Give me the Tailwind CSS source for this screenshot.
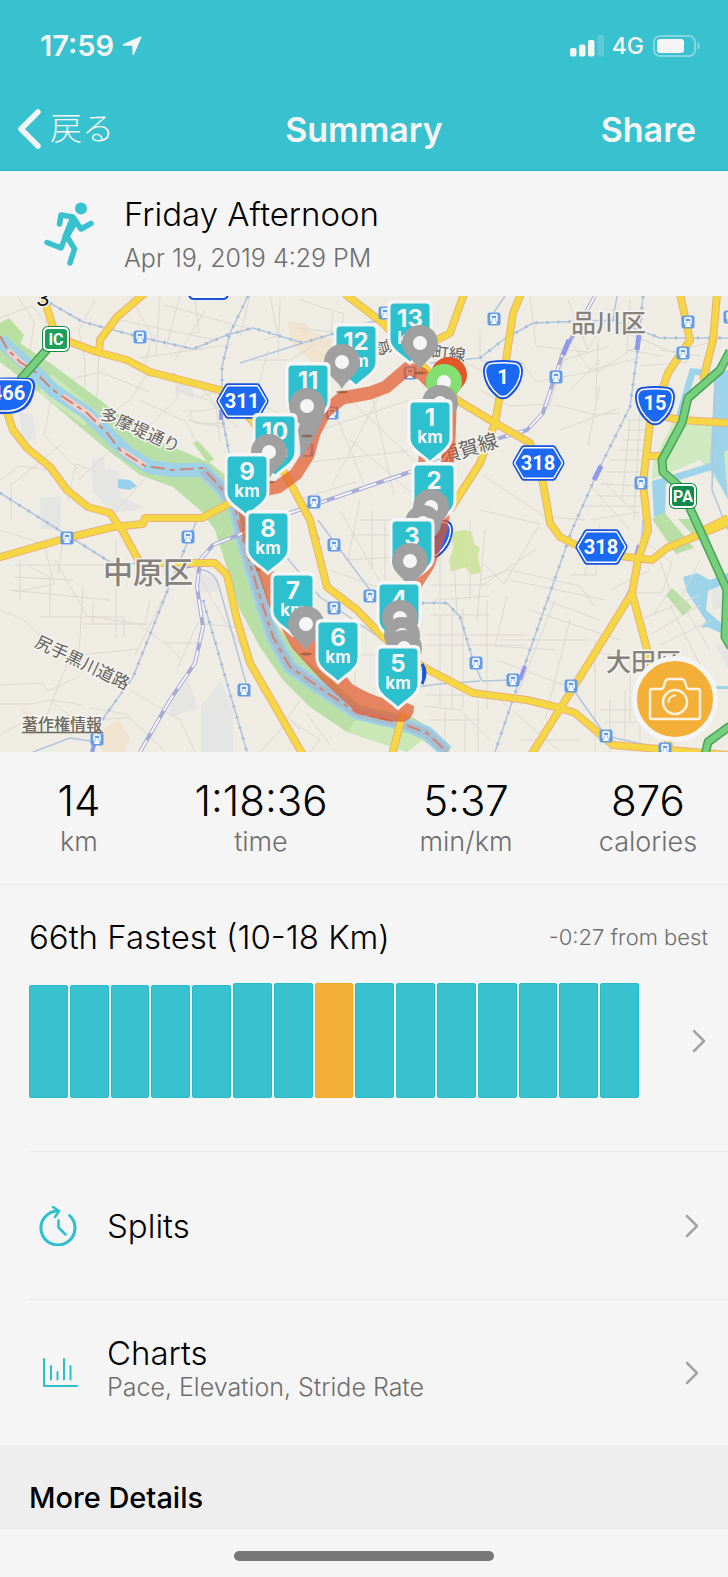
<!DOCTYPE html>
<html lang="ja">

<head>
    <meta charset="UTF-8">
    <meta name="viewport" content="width=device-width, initial-scale=1.0">
    <title>Summary</title>
    <script src="https://cdn.jsdelivr.net/npm/@tailwindcss/browser@4"></script>
</head>

<body class="bg-[#f5f5f5] text-black font-['Inter','Noto_Sans_CJK_JP',sans-serif]">

    <!-- Header -->
    <header class="bg-[#38c1cf] text-[#f5f5f5] border-b border-[#1bb9c9]">
        <div class="flex items-center justify-between pt-6 pl-10 pr-7 h-[68px]">
            <div class="flex items-center gap-2 text-[29px] leading-10 font-semibold">
                <span>17:59</span>
                <svg class="w-5 h-5" viewBox="0 0 20 20" fill="currentColor"><path d="M18.500 .6c.6-.2 1.100.3.9.9l-7.400 17c-.3.800-1.600.6-1.600-.3V9.800H1.700c-1 0-1.200-1.300-.3-1.700z" /></svg>
            </div>
            <div class="flex items-center gap-2">
                <svg class="w-[34px] h-[22px]" viewBox="0 0 34 22" fill="currentColor">
                    <rect x="0" y="13" width="6.500" height="8.500" rx="2" />
                    <rect x="9" y="9.500" width="6.500" height="12" rx="2" />
                    <rect x="18" y="5" width="6.500" height="16.500" rx="2" />
                    <rect x="27.500" y="0" width="6.500" height="21.500" rx="2" opacity=".2" />
                </svg>
                <span class="text-[23px] leading-8 font-medium">4G</span>
                <svg class="w-12 h-6" viewBox="0 0 48 24">
                    <rect x="2" y="2" width="41" height="20" rx="6" fill="none" stroke="#f5f5f5" stroke-opacity=".4" stroke-width="2" />
                    <rect x="5" y="5" width="27" height="14" rx="3" fill="#f5f5f5" />
                    <path d="M45.500 8.500c3 1.200 3 5.800 0 7z" fill="#f5f5f5" fill-opacity=".45" />
                </svg>
            </div>
        </div>
        <nav class="grid grid-cols-3 items-center h-[102px] pt-5 px-4 text-[34px]">
            <a href="#" class="flex items-center gap-2 text-[32px] font-light">
                <svg class="w-[26px] h-[42px]" viewBox="0 0 26 42" fill="none" stroke="currentColor" stroke-width="5.500" stroke-linecap="round" stroke-linejoin="round"><path d="M22 4 5 21l17 17" /></svg>
                戻る
            </a>
            <h1 class="text-center font-semibold">Summary</h1>
            <button class="justify-self-end mr-4 font-semibold">Share</button>
        </nav>
    </header>

    <main>
        <!-- Activity title -->
        <section class="flex items-center gap-7 h-[125px] pl-11 pr-8">
            <svg class="w-[52px] h-16 shrink-0" viewBox="0 0 52 64" fill="none" stroke="#38c1cf" stroke-width="5.500" stroke-linecap="round" stroke-linejoin="round">
                <circle cx="37" cy="6.500" r="6" fill="#38c1cf" stroke="none" />
                <path d="M15.500 22 17 13l12 2 8 12 10-5.500" />
                <path d="m29 16-12 30L3 40.500" />
                <path d="m22 33 8.500 14L26 61" />
                <path d="m27 17-7 17 4 1 9-15z" fill="#38c1cf" stroke-width="3" />
            </svg>
            <div class="pt-1">
                <h2 class="text-[33px] leading-10 font-light">Friday Afternoon</h2>
                <p class="mt-1 text-[25px] leading-10 font-light text-[#6e6e6e]">Apr 19, 2019 4:29 PM</p>
            </div>
        </section>

        <!-- Route map -->
        <section class="relative">
            <svg class="block w-full" viewBox="0 296 728 456" role="img" aria-label="Route map">
                <defs>
                    <symbol id="train" viewBox="0 0 14 14">
                        <rect x=".5" y=".5" width="13" height="13" rx="2.500" fill="#629be8" />
                        <path d="M4.800 2.300h4.400c.8 0 1.300.5 1.300 1.300v4.600c0 .8-.5 1.300-1.300 1.300H4.800c-.8 0-1.300-.5-1.300-1.300V3.600c0-.8.5-1.300 1.300-1.300zM4 12l1.300-2.200h3.400L10 12" fill="#fff" stroke="#fff" stroke-width=".5" />
                        <path d="M4.800 3.800h4.400v2.400H4.800z" fill="#629be8" />
                        <circle cx="5.200" cy="8" r=".7" fill="#629be8" />
                        <circle cx="8.800" cy="8" r=".7" fill="#629be8" />
                    </symbol>
                    <symbol id="shield" viewBox="0 0 46 66">
                        <path d="M6 0h34q5.500 0 5.500 6v33c0 12-12 16.500-22.500 26.500C12.500 55.500.5 51 .5 39V6Q.5 0 6 0z" fill="#f5f5f5" />
                        <path d="M7 3.500h32q3.500 0 3.500 3.500v32c0 9.500-10.500 14-19.500 22.500C14 53 3.500 48.500 3.500 39V7q0-3.500 3.500-3.500z" fill="#2dc0cf" />
                    </symbol>
                    <symbol id="pin" viewBox="0 0 40 52">
                        <ellipse cx="20" cy="49" rx="6" ry="1.500" fill="#7a4a2c" opacity=".6" />
                        <path d="M20 1a18 18 0 0 1 18 18c0 12-13 17-18 27C15 36 2 31 2 19A18 18 0 0 1 20 1z" />
                        <circle cx="20" cy="19" r="7" fill="#f5f5f5" />
                    </symbol>
                    <symbol id="national" viewBox="0 0 42 40">
                        <path d="M8 1q13-2 26 0c5 1 7 5 7 11-1 13-9 22-15 26q-5 2.500-10 0C10 34 2 25 1 12 1 6 3 2 8 1z" fill="#1a53e0" />
                        <path d="M9 3.500q12-1.500 24 0c4 .8 5.500 4 5.500 8.500-1 11-8 19-13.500 23.500q-4 2-8 0C11.500 31 4.500 23 3.500 12c0-4.500 1.500-7.700 5.500-8.500z" fill="#1b68f2" stroke="#fff" stroke-width="1.500" />
                    </symbol>
                    <symbol id="prefectural" viewBox="0 0 54 38">
                        <path d="M12 1h30q2 0 3 2l8 14q1 2 0 4l-8 14q-1 2-3 2H12q-2 0-3-2L1 21q-1-2 0-4L9 3q1-2 3-2z" fill="#1a53e0" />
                        <path d="M13 3.500h28q1.500 0 2 1L51 18q.5 1 0 2l-8 13.500q-.5 1-2 1H13q-1.500 0-2-1L3 20q-.5-1 0-2l8-13.500q.5-1 2-1z" fill="#1b68f2" stroke="#fff" stroke-width="1.500" />
                    </symbol>
                    <path id="street1" d="M99 418 185 457" />
                    <path id="street2" d="M34 646Q80 668 136 695" />
                </defs>

                <rect x="0" y="296" width="728" height="456" fill="#efece4" />

                <!-- Blocks and parks -->
                <path d="M92 459l12-2 1 12 14 2 2 27 24 8-10 5-22 1-20-20zM178 383l14-2 2 18-18-8zM18 412l15 3 3 22-12 6zM40 498l21-2v33H41zM170 697l18-20 10 32-28 8zM201 706l20-26 12 30v42h-32zM198 573l20 3v16h-20zM716 647l12-6v28zM711 588l17-2v20l-15 4z" fill="#e5e5e4" />
                <path d="M118 479l12 1 7 6-8 4-11-2z" fill="#97d0e8" />
                <path d="M287 321l20 3 5 8 20 8-2 25-13 3-26-26zM22 710l12 5 8 18-12 2zM98 732l20-12 12 18-6 14H102z" fill="#f0e4d0" />
                <path d="M0 323l9-5 15 17-5 12-19-8zM193 443l5-2 16 18-6 4z" fill="#badf9f" />
                <path d="M452 532l12-2 8 2 2 12 6 4-2 8 3 16-10 3-6-8-14 5-2-12 5-12z" fill="#cfe49c" />
                <path d="M673 422l55 3v70l-28-35-48 20 1-18z" fill="#cfe9c0" />
                <path d="M690 368l20 2-2 6-13-1-14 45h-6zM715 370h13v80l-4 2 4 48-16-30-46 14-1 32-11 1-2-36 58-18z" fill="#9dd4e9" />
                <path d="M652 519l24 35 18-6-30-36zM678 519l20 22-6-22zM666 595l6-7 20 19-9 9z" fill="#b9dea6" />
                <path d="M683 577l14-4 13 7 18-7v9l-20 9-2 19 14 12 8 8v6l-21-9-6 1 5-7-19-29z" fill="#9dd4e9" />
                <path d="M714 686h14v3h-14z" fill="#9dd4e9" />

                <!-- Minor streets -->
                <g fill="none" stroke="#dcd9d1" stroke-width="1">
                    <path d="M18 296l16 26-4 30M0 318l32-12 28 32M95 300l-16 30 6 30M130 296l22 40-8 34M160 296l-4 60M165 305l85 24M180 296l-14 52M205 310l-30 50M195 300l4 33-8 0M120 320l95 20M140 358l92-14M99 350l-2 50 18 20M85 360l0 30-30 10M70 380l30-8 50 20M150 370l-20 30-20 14M130 365l20 12 24-4 4 24-28 28" />
                    <path d="M182 411l20 0 20-4M178 390l30 10 30 28M196 380l20 26 4 36M200 398q16-12 28 6t-16 20-20-14M188 420l40 8M140 400l46 22 10 20M52 395l-8 40 34 34M78 480l40-36 34 20M11 520l0-35 50-40M68 500l8-36 20 8M150 473l-36 40M0 480l20-14 30 4M0 530l44 14 10 40-40 8" />
                    <path d="M14 565h90M14 577l60 3M10 590l100 10M20 560v40M62 545l-4 30M50 617v-40l-20-10M0 610l24 10 44 42-28 70M83 587l-4 68 60-6M55 560l32 56 60 9M116 540v98M93 605v20M40 617h84v20M150 600l-5 24H83M135 655l30-60 20-38M160 640l-20-14M160 643h40M178 667l20-45M182 660l-20-20M0 685l42-2 6 8 30-14M0 704l30 0 22-4 30 5M0 735l22-12M90 708l36 6 40 38M130 690l50 30 15 32M50 700l25 20 55-2M190 560l34 60 26 40M205 624l45 5" />
                    <path d="M250 296l-10 40M270 296l8 40-14 4M280 300l-2 55M333 312l-2 20-32-4M300 300l44 14-4 24M250 360l40 0 26-16M268 350l-12 46M330 400l34 84M345 395l80 76M320 430l90-30M300 463l108-12M380 395l-48 90M350 440l70 60M250 400l40 18M340 510l50 90M372 395l22 100M460 360l60 30M480 330l0 30 40 10M296 500l60-18M360 500l-12 60" />
                    <path d="M360 520h70M350 535h70M372 510v60M385 520v60M345 560l70-4M330 570l50 18M330 630l60-6M345 640l-3 50M350 655h35M355 640v60M440 540v70M452 525l5 90M470 520v80M485 530l-8 90M430 585h60M435 600l55-4M430 615h60M425 635h100M425 645h100M440 615v90M452 610v100M463 608v100M487 600v110M425 695h60M430 720h50M445 710v42M465 715v37M478 700v52M425 706l35 4 30 30" />
                    <path d="M300 700l-20 30-20 22M290 720l30 20-10 12M330 745l-24-32M260 690l40 40" />
                    <path d="M530 296l6 50 50 6 30-46M570 340l20 30 50-12M480 390l30 16 40-2M520 360l16 22 64-12 40-26M548 410l16-50 45-14M556 405l40 10 24-2M600 385l-12 60M560 430l60-22M568 300l20 50M598 340l-2 60M570 390l30-30M630 300l-3 50 35 6M620 330l52 22 40-10M660 350l40 6M640 366l50-4M627 420h26M625 430h26M622 440h26M620 450h27M610 460h34M605 472h35M600 484l50 2M596 496h50M630 420l-8 80M640 410l-6 110M590 485l40 45M600 478l40 40M585 506h55M590 520l50-8" />
                    <path d="M484 476l60 40 40 4M480 510l60 14-36 60-20-20M480 587l56-38M510 580l95 20M480 580l30-10 70 16 14 20M507 596l-12 50 60 4M530 610l90 30M545 600l55 20M555 600l-40 100M570 620l-25 100M570 575l26 0v-12M600 525l-16 50M590 650l40 10v60M595 640v112M610 590l40-20M632 593l30 0 10-30-32-26M660 560l10 30-16 24M640 620l60-25M650 635l50-30M660 645l52-25M680 600l30 50M700 560l-20 40M670 605l30 60M500 640h90M497 660l80 30M500 700l60 52M610 700v52M625 690v60M600 710h80M605 722h60M640 690v62M520 740h60" />
                </g>

                <!-- River -->
                <path d="M0 330 50 363 100 400 147 437 180 450 210 463 234 482 247 540 273 620 300 655 360 705 412 717 430 728 450 752H440L422 740 407 752 347 732 310 707 283 680 260 647 240 610 215 530 200 510 173 487 140 475 110 452 80 427 40 393 0 362z" fill="#b9dea6" />
                <path d="M38 392 84 426 100 414 52 374zM347 732 407 752 422 740 400 728 358 716z" fill="#cae7b6" />
                <path d="M0 340 33 370 53 390 87 413 107 433 127 453 150 467 173 470 203 470 220 487 235 507 243 540 260 597 273 637 290 667 323 690 357 713 400 723 427 733 447 752" fill="none" stroke="#9fd2e6" stroke-width="14" stroke-linejoin="round" />
                <path d="M203 470 220 487 235 507 243 540 260 597 273 637 290 667 323 690 357 713 400 723 427 733 447 752" fill="none" stroke="#a5bed0" stroke-width="9" stroke-linejoin="round" />
                <path d="M8 350 20 362 33 370M62 396 87 413 100 424M120 450 145 466" fill="none" stroke="#f0cfc7" stroke-width="6" />
                <path d="M0 336 8 350 20 362 33 370 53 390 87 413 107 433 120 450 145 466 173 470 203 468 220 487 235 507 243 540 260 597 273 637 290 667 323 690 357 713 400 723 427 733 447 752" fill="none" stroke="#cf8379" stroke-width="2" stroke-dasharray="14 5 5 5" />

                <!-- Railways -->
                <g fill="none" stroke-linejoin="round">
                    <path d="M50 303 83 322 140 337 193 349 227 335 253 328 303 343 387 317M240 363 303 343M248 296 230 333 222 367 222 417 230 457M0 493 43 520 110 562 140 564M197 520 173 577 133 677 97 727M97 742 70 738 33 752M505 296 490 318M430 363 480 358 503 340 533 323 613 320 617 296M613 320 660 338 728 338M643 296 638 347 630 407 600 467 572 530 523 670 495 752M203 600 247 752M200 570Q215 570 220 590L250 697M283 553 320 597 383 640M318 520 370 590 400 600M422 603 447 603 460 617 474 663 482 681 513 680M390 690 440 684 480 681M300 500 320 540M571 686 606 736 665 749M643 520 640 570 580 680 530 752M715 370 712 490 728 530" stroke="#b3c5dd" stroke-width="1.500" />
                    <path d="M50 303 83 322 140 337 193 349 227 335 253 328 303 343 387 317M248 296 230 333 222 367 222 417 230 457M0 493 43 520 110 562M197 520 173 577 133 677 97 727M480 358 503 340 533 323 613 320 660 338 728 338M643 296 638 347 630 407 600 467 572 530 523 670 495 752M203 600 247 752M422 603 447 603 460 617 474 663" stroke="#a3bbda" stroke-width="3" stroke-dasharray="2 9" />
                </g>
                <g fill="none" stroke-linejoin="round">
                    <path d="M595 296 563 353 543 413 527 430 503 437 407 473 290 513 243 533 213 545 200 560 197 587 203 627 195 663 170 700 140 752" stroke="#a7abd8" stroke-width="4" />
                    <path d="M595 296 563 353 543 413 527 430 503 437 407 473 290 513 243 533 213 545 200 560 197 587 203 627 195 663 170 700 140 752" stroke="#f7f7fb" stroke-width="2" stroke-dasharray="18 8" />
                    <path d="M569 340 563 355M601 466 594 480M639 335 637 350M174 568 197 564" stroke="#8f9aea" stroke-width="5" />
                    <path d="M639 545 636 556M525 666 520 680M95 742 92 752M221 410V420" stroke="#8f9aea" stroke-width="4" />
                </g>

                <!-- Main roads -->
                <g fill="none" stroke-linejoin="round">
                    <g stroke="#e9b179" stroke-width="8">
                        <path d="M43 296 54 330 70 342 97 352 127 360 150 372 220 390 252 420 287 477 310 520 327 587 357 610 383 637 423 667 473 693 527 700 560 708 575 713 613 745 728 755M145 293 117 317 100 340 99 352M0 396 7 413 13 430 27 448 50 467 67 490 88 507 110 513 122 530 140 563 215 563 227 575 237 620 250 663 303 755M230 503 202 518 145 518 143 524 113 527 67 538-3 558M345 294 383 323 420 363 457 400 490 420 530 443 543 483 550 523 560 537 580 547 627 557 652 560 667 548 730 522M464 294 450 333 437 340M521 294 513 313 505 367 495 423 480 463 450 510M680 294 690 340 668 373 663 387 650 423 643 483 648 530 638 560 632 593 580 677 531 755M717 294 713 340 703 380M657 415 680 420 730 423M647 456H663M632 593 648 653 671 755M403 713 392 755M728 518 700 532" />
                    </g>
                    <g stroke="#f5d643" stroke-width="6">
                        <path d="M43 296 54 330 70 342 97 352 127 360 150 372 220 390 252 420 287 477 310 520 327 587 357 610 383 637 423 667 473 693 527 700 560 708 575 713 613 745 728 755M145 293 117 317 100 340 99 352M0 396 7 413 13 430 27 448 50 467 67 490 88 507 110 513 122 530 140 563 215 563 227 575 237 620 250 663 303 755M230 503 202 518 145 518 143 524 113 527 67 538-3 558M345 294 383 323 420 363 457 400 490 420 530 443 543 483 550 523 560 537 580 547 627 557 652 560 667 548 730 522M464 294 450 333 437 340M521 294 513 313 505 367 495 423 480 463 450 510M680 294 690 340 668 373 663 387 650 423 643 483 648 530 638 560 632 593 580 677 531 755M717 294 713 340 703 380M657 415 680 420 730 423M647 456H663M632 593 648 653 671 755M403 713 392 755M728 518 700 532" />
                    </g>
                    <path d="M50 346 20 380M730 351 720 370 688 398 682 423 662 460 663 472 680 487 700 530 727 590 725 637 731 647M730 726 708 742 705 755" stroke="#47a454" stroke-width="9" />
                    <path d="M50 346 20 380M730 351 720 370 688 398 682 423 662 460 663 472 680 487 700 530 727 590 725 637 731 647M730 726 708 742 705 755" stroke="#77cf7e" stroke-width="6" />
                </g>

                <!-- Stations -->
                <g>
                    <use href="#train" x="133" y="330" width="14" height="14" /><use href="#train" x="325" y="406" width="14" height="14" />
                    <use href="#train" x="307" y="495" width="14" height="14" /><use href="#train" x="378" y="306" width="14" height="14" />
                    <use href="#train" x="403" y="366" width="14" height="14" /><use href="#train" x="300" y="443" width="14" height="14" />
                    <use href="#train" x="487" y="312" width="14" height="14" /><use href="#train" x="549" y="370" width="14" height="14" />
                    <use href="#train" x="681" y="315" width="14" height="14" /><use href="#train" x="676" y="346" width="14" height="14" />
                    <use href="#train" x="634" y="476" width="14" height="14" /><use href="#train" x="723" y="310" width="14" height="14" />
                    <use href="#train" x="60" y="531" width="14" height="14" /><use href="#train" x="181" y="530" width="14" height="14" />
                    <use href="#train" x="90" y="732" width="14" height="14" /><use href="#train" x="237" y="683" width="14" height="14" />
                    <use href="#train" x="327" y="538" width="14" height="14" /><use href="#train" x="327" y="601" width="14" height="14" />
                    <use href="#train" x="363" y="589" width="14" height="14" /><use href="#train" x="469" y="656" width="14" height="14" />
                    <use href="#train" x="506" y="673" width="14" height="14" /><use href="#train" x="564" y="679" width="14" height="14" />
                    <use href="#train" x="599" y="729" width="14" height="14" /><use href="#train" x="658" y="742" width="14" height="14" />
                </g>

                <!-- Place names -->
                <g fill="#85817c" stroke="#f5f3ee" stroke-width="3" paint-order="stroke" font-weight="500">
                    <text x="571" y="332" font-size="25">品川区</text>
                    <text x="103" y="583" font-size="30">中原区</text>
                    <text x="606" y="671" font-size="25">大田区</text>
                    <g font-size="17" font-weight="400" fill="#66625e">
                        <text><textPath href="#street1">多摩堤通り</textPath></text>
                        <text><textPath href="#street2">尻手黒川道路</textPath></text>
                        <text x="379" y="353" transform="rotate(75 386 345)">爲</text>
                        <text x="431" y="358" transform="rotate(6 431 358)">町線</text>
                        <text x="442" y="464" font-size="20" transform="rotate(-17 442 464)">須賀線</text>
                    </g>
                    <text x="22" y="730" font-size="16" fill="#6b6761">著作権情報</text>
                    <path d="M22 732.500h81" stroke="#6b6761" stroke-width="1.500" />
                    <text x="36" y="306" font-size="22" font-weight="400" fill="#111">3</text>
                </g>

                <!-- Route signs -->
                <path d="M189 293h39q0 6-5 6h-29q-5 0-5-6z" fill="#fff" stroke="#1a53e0" stroke-width="2" />
                <g fill="#fff" font-size="20" text-anchor="middle" class="font-['Roboto',sans-serif] font-bold">
                    <rect x="42" y="326" width="28" height="26" rx="6" fill="#128a4b" />
                    <rect x="44" y="328" width="24" height="22" rx="4" fill="#1e9f5b" stroke="#fff" stroke-width="2" />
                    <text x="56" y="345" font-size="16">IC</text>
                    <rect x="669" y="483" width="28" height="26" rx="6" fill="#128a4b" />
                    <rect x="671" y="485" width="24" height="22" rx="4" fill="#12894a" stroke="#fff" stroke-width="2" />
                    <text x="683" y="502" font-size="16">PA</text>
                    <path d="M-10 378q20-1 40 0 6 2 5 10c-3 19-12 25-27 26h-18z" fill="#1a53e0" />
                    <path d="M-10 380q20-1 38 0 5 2 4 8c-3 16-11 22-24 23h-18z" fill="#1b68f2" stroke="#fff" stroke-width="1.500" />
                    <text x="8" y="400">466</text>
                    <use href="#prefectural" x="216" y="382" width="53" height="38" /><text x="242" y="408">311</text>
                    <use href="#prefectural" x="512" y="444" width="53" height="38" /><text x="538" y="470">318</text>
                    <use href="#prefectural" x="575" y="528" width="53" height="38" /><text x="601" y="554">318</text>
                    <use href="#national" x="482" y="360" width="42" height="40" /><text x="503" y="384">1</text>
                    <use href="#national" x="634" y="386" width="42" height="40" /><text x="655" y="410">15</text>
                    <use href="#national" x="412" y="519" width="42" height="40" />
                    <path d="M422 664q6 8 0 20" fill="#1b68f2" stroke="#1a53e0" stroke-width="3" />
                </g>

                <!-- Track -->
                <g fill="none" stroke="#e2582b" stroke-opacity=".7" stroke-linejoin="round" stroke-linecap="round">
                    <path d="M242 500 248 535 262 570" stroke-width="11" stroke-linecap="butt" />
                    <path d="M256 568 268 560 282 590 300 620 330 655 352 684Q380 701 405 702L414 706Q414 720 402 722 378 721 356 712L322 681 292 648 268 604z" fill="#e2582b" fill-opacity=".7" stroke="none" />
                    <path d="M264 490 278 487 296 474 308 455 314 433 325 412 342 398 370 393 386 387 408 368 422 374 440 392 450 410 449 440 445 500 441 530 428 565 412 590" stroke-width="13" />
                    <path d="M423 449 421 470 434 500" stroke-width="7" />
                </g>

                <!-- Photo pins and kilometre markers -->
                <g fill="#a0a0a0" class="font-bold">
                    <use href="#pin" x="429" y="356" width="40" height="52" fill="#e2562a" />
                    <use href="#pin" x="424" y="363" width="40" height="52" fill="#82e070" />
                    <use href="#shield" x="387" y="300" width="46" height="66" />
                    <text x="410" y="327" fill="#f5f5f5" font-size="24" text-anchor="middle">13<tspan x="410" dy="17" font-size="17">km</tspan></text>
                    <use href="#pin" x="400" y="324" width="40" height="52" />
                    <use href="#shield" x="333" y="323" width="46" height="66" />
                    <text x="356" y="350" fill="#f5f5f5" font-size="24" text-anchor="middle">12<tspan x="356" dy="17" font-size="17">km</tspan></text>
                    <use href="#pin" x="322" y="343" width="40" height="52" />
                    <use href="#pin" x="420" y="384" width="40" height="52" />
                    <use href="#shield" x="285" y="362" width="46" height="66" />
                    <text x="308" y="389" fill="#f5f5f5" font-size="24" text-anchor="middle">11<tspan x="308" dy="17" font-size="17">km</tspan></text>
                    <path d="M306 404h19c0 12-3 18-7 26-3 12-13 18-16 30l-4-30z" />
                    <use href="#pin" x="287" y="387" width="40" height="52" />
                    <use href="#shield" x="252" y="413" width="46" height="66" />
                    <text x="275" y="440" fill="#f5f5f5" font-size="24" text-anchor="middle">10<tspan x="275" dy="17" font-size="17">km</tspan></text>
                    <use href="#shield" x="407" y="399" width="46" height="66" />
                    <text x="430" y="426" fill="#f5f5f5" font-size="24" text-anchor="middle">1<tspan x="430" dy="17" font-size="17">km</tspan></text>
                    <use href="#pin" x="249" y="433" width="40" height="52" />
                    <use href="#shield" x="224" y="453" width="46" height="66" />
                    <text x="247" y="480" fill="#f5f5f5" font-size="24" text-anchor="middle">9<tspan x="247" dy="17" font-size="17">km</tspan></text>
                    <use href="#shield" x="411" y="462" width="46" height="66" />
                    <text x="434" y="489" fill="#f5f5f5" font-size="24" text-anchor="middle">2<tspan x="434" dy="17" font-size="17">km</tspan></text>
                    <use href="#pin" x="411" y="488" width="40" height="52" />
                    <use href="#pin" x="403" y="504" width="40" height="52" />
                    <use href="#shield" x="245" y="510" width="46" height="66" />
                    <text x="268" y="537" fill="#f5f5f5" font-size="24" text-anchor="middle">8<tspan x="268" dy="17" font-size="17">km</tspan></text>
                    <use href="#shield" x="389" y="518" width="46" height="66" />
                    <text x="412" y="545" fill="#f5f5f5" font-size="24" text-anchor="middle">3<tspan x="412" dy="17" font-size="17">km</tspan></text>
                    <use href="#pin" x="390" y="542" width="40" height="52" />
                    <use href="#shield" x="270" y="572" width="46" height="66" />
                    <text x="293" y="599" fill="#f5f5f5" font-size="24" text-anchor="middle">7<tspan x="293" dy="17" font-size="17">km</tspan></text>
                    <use href="#shield" x="376" y="581" width="46" height="66" />
                    <text x="399" y="608" fill="#f5f5f5" font-size="24" text-anchor="middle">4<tspan x="399" dy="17" font-size="17">km</tspan></text>
                    <use href="#pin" x="380" y="599" width="40" height="52" />
                    <use href="#pin" x="382" y="616" width="40" height="52" />
                    <use href="#pin" x="384" y="629" width="40" height="52" />
                    <use href="#pin" x="286" y="605" width="40" height="52" />
                    <use href="#shield" x="315" y="619" width="46" height="66" />
                    <text x="338" y="646" fill="#f5f5f5" font-size="24" text-anchor="middle">6<tspan x="338" dy="17" font-size="17">km</tspan></text>
                    <use href="#shield" x="375" y="645" width="46" height="66" />
                    <text x="398" y="672" fill="#f5f5f5" font-size="24" text-anchor="middle">5<tspan x="398" dy="17" font-size="17">km</tspan></text>
                </g>
            </svg>
            <button aria-label="Add photo" class="absolute right-2.5 bottom-2.5 flex items-center justify-center size-[86px] rounded-full border-5 border-[#f5f5f5] bg-[#f3af37]">
                <svg class="w-[54px] h-11" viewBox="0 0 54 44" fill="none" stroke="#fdf3e0" stroke-width="2.500" stroke-linejoin="round">
                    <path d="M4 12h9q2 0 2.500-2L17 5q1-3 4-3h12q3 0 4 3l1.500 5q.5 2 2.500 2h9q2 0 2 2v26q0 2-2 2H4q-2 0-2-2V14q0-2 2-2z" />
                    <circle cx="27" cy="25" r="12" />
                    <path d="M20.500 25a6.500 6.500 0 0 1 6.500-6.500" stroke-width="2" stroke-linecap="round" />
                </svg>
            </button>
        </section>

        <!-- Totals -->
        <section class="grid grid-cols-[158fr_206fr_204fr_160fr] h-[133px] pt-6 text-center border-b border-[#e9e9e9]">
            <div>
                <p class="text-[42px] leading-[50px] font-light">14</p>
                <p class="text-[27px] leading-8 font-light text-[#6e6e6e]">km</p>
            </div>
            <div>
                <p class="text-[42px] leading-[50px] font-light">1:18:36</p>
                <p class="text-[27px] leading-8 font-light text-[#6e6e6e]">time</p>
            </div>
            <div>
                <p class="text-[42px] leading-[50px] font-light">5:37</p>
                <p class="text-[27px] leading-8 font-light text-[#6e6e6e]">min/km</p>
            </div>
            <div>
                <p class="text-[42px] leading-[50px] font-light">876</p>
                <p class="text-[27px] leading-8 font-light text-[#6e6e6e]">calories</p>
            </div>
        </section>

        <!-- Ranking -->
        <section class="pt-8 h-[266px]">
            <div class="flex items-center justify-between pl-[29px] pr-5">
                <h3 class="text-[33px] leading-10 font-light">66th Fastest (10-18 Km)</h3>
                <span class="text-[22px] leading-10 font-light text-[#6e6e6e]">-0:27 from best</span>
            </div>
            <a href="#" aria-label="All results" class="flex items-center justify-between mt-[26px] pl-[29px] pr-5">
                <div id="rankBars" class="flex items-end gap-[2px] w-[610px] h-[115px]"></div>
                <svg class="w-4 h-6" viewBox="0 0 16 24" fill="none" stroke="#a3a3a3" stroke-width="2.500" stroke-linecap="round" stroke-linejoin="round"><path d="m2 2 10 10L2 22" /></svg>
            </a>
        </section>

        <a href="#" class="flex items-center ml-[29px] pl-[10px] pr-[27px] h-[148px] border-t border-[#e9e9e9]">
            <svg class="w-10 h-10" viewBox="0 0 40 40" fill="none" stroke="#2cbfce" stroke-width="3" stroke-linecap="round" stroke-linejoin="round">
                <path d="M30.500 9.500a17 17 0 1 1-11-4.500" />
                <path d="m14 1 6 4-4 6M19.500 14.500v7l7 7" stroke-width="2.500" />
            </svg>
            <span class="ml-7 grow text-[33px] leading-10 font-light">Splits</span>
            <svg class="w-4 h-6" viewBox="0 0 16 24" fill="none" stroke="#a3a3a3" stroke-width="2.500" stroke-linecap="round" stroke-linejoin="round"><path d="m2 2 10 10L2 22" /></svg>
        </a>

        <a href="#" class="flex items-center ml-[29px] pl-[10px] pr-[27px] h-[147px] border-t border-[#e9e9e9]">
            <svg class="w-10 h-10" viewBox="0 0 40 40" fill="none" stroke="#2cbfce" stroke-width="2" stroke-linecap="round" stroke-linejoin="round">
                <path d="M5 6v27h33M12 13v13.500M18.500 19v7.500M25 6v20.500M31.500 13v13.500" />
            </svg>
            <span class="ml-7 pb-2 grow font-light">
                <span class="block text-[33px] leading-9">Charts</span>
                <span class="block text-[25px] leading-8 text-[#6e6e6e]">Pace, Elevation, Stride Rate</span>
            </span>
            <svg class="w-4 h-6" viewBox="0 0 16 24" fill="none" stroke="#a3a3a3" stroke-width="2.500" stroke-linecap="round" stroke-linejoin="round"><path d="m2 2 10 10L2 22" /></svg>
        </a>

        <section class="flex items-center h-[83px] pt-5 pl-[29px] bg-[#eeeeee] border-y border-[#e9e9e9]">
            <h3 class="text-[29px] leading-10 font-medium">More Details</h3>
        </section>
    </main>

    <!-- Home indicator -->
    <footer class="flex justify-center pt-[22px] pb-4">
        <div class="w-[260px] h-[10px] rounded-full bg-[#787878]"></div>
    </footer>

    <script>
        // Heights of the ranking bars; the current run is highlighted
        const bars = [113, 113, 113, 113, 113, 115, 115, 115, 115, 115, 115, 115, 115, 115, 115];
        const current = 7;
        const rankBars = document.getElementById("rankBars");

        bars.forEach((height, i) => {
            const bar = document.createElement("div");
            bar.className = i === current
                ? "flex-1 rounded-[2px] border border-[#f5a81c] bg-[#f3af37]"
                : "flex-1 rounded-[2px] border border-[#25bccb] bg-[#38c1cf]";
            bar.style.height = `${height}px`;
            rankBars.appendChild(bar);
        });
    </script>
</body>

</html>
